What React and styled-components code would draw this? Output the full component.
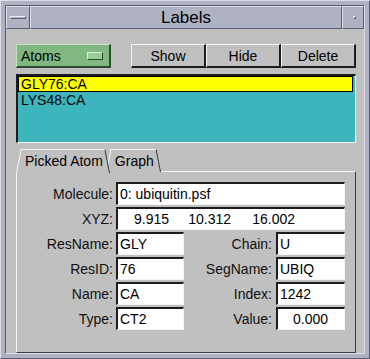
import React from "react";
import styled, { createGlobalStyle } from "styled-components";

const Global = createGlobalStyle`
  html, body { margin: 0; padding: 0; background: #aeb2c3; }
  body { font-family: "Liberation Sans", Arial, Helvetica, sans-serif; color: #000; }
`;

const Frame = styled.div`
  box-sizing: border-box;
  width: 370px;
  height: 359px;
  background: #aeb2c3;
  border-style: solid;
  border-width: 1px;
  border-color: #dcdee8 #5a5e73 #5a5e73 #dcdee8;
  padding: 4px;
  display: flex;
`;

const Inner = styled.div`
  flex: 1;
  display: flex;
  flex-direction: column;
  border-style: solid;
  border-width: 1px;
  border-color: #5a5e73 #dcdee8 #dcdee8 #5a5e73;
  min-height: 0;
`;

const TitleBar = styled.div`
  display: flex;
  height: 23px;
  flex: none;
`;

const TitleCell = styled.div`
  box-sizing: border-box;
  display: flex;
  align-items: center;
  justify-content: center;
  width: ${(p) => (p.$w ? `${p.$w}px` : "auto")};
  flex: ${(p) => (p.$w ? "none" : "1")};
  background: #aeb2c3;
  border-style: solid;
  border-width: 1px;
  border-color: #dcdee8 #5a5e73 #5a5e73 #dcdee8;
  font-size: 17px;
`;

const MinGlyph = styled.span`
  box-sizing: border-box;
  width: 16px;
  height: 3px;
  margin-top: -1px;
  border-style: solid;
  border-width: 1px;
  border-color: #eceef4 #5a5e73 #5a5e73 #eceef4;
`;

const MaxGlyph = styled.span`
  box-sizing: border-box;
  width: 3px;
  height: 3px;
  margin-top: -1px;
  margin-left: 3px;
  border-style: solid;
  border-width: 1px;
  border-color: #eceef4 #5a5e73 #5a5e73 #eceef4;
`;

const Body = styled.div`
  flex: 1;
  display: flex;
  flex-direction: column;
  background: #c0c0c0;
  padding: 15px 8px 0 10px;
  min-height: 0;
`;

const Toolbar = styled.div`
  display: flex;
  height: 24px;
  gap: 20px;
`;

const OptionMenu = styled.div`
  box-sizing: border-box;
  width: 95px;
  height: 24px;
  background: #80b880;
  border-style: solid;
  border-width: 1px 2px 2px 1px;
  border-color: #c6e2c6 #2c4a2c #2c4a2c #c6e2c6;
  display: flex;
  align-items: center;
  justify-content: space-between;
  padding: 0 6px 0 4px;
  font-size: 14px;
`;

const Indicator = styled.span`
  box-sizing: border-box;
  width: 16px;
  height: 8px;
  background: #9ccc9c;
  border-style: solid;
  border-width: 1px;
  border-color: #d8ecd8 #2c4a2c #2c4a2c #d8ecd8;
`;

const ButtonGroup = styled.div`
  flex: 1;
  display: grid;
  grid-template-columns: repeat(3, 1fr);
`;

const PushButton = styled.div`
  box-sizing: border-box;
  display: flex;
  align-items: center;
  justify-content: center;
  background: #c0c0c0;
  border-style: solid;
  border-width: 1px 2px 2px 1px;
  border-color: #f4f4f4 #1c1c1c #1c1c1c #f4f4f4;
  font-size: 14px;
`;

const List = styled.div`
  box-sizing: border-box;
  margin-top: 6px;
  height: 69px;
  background: #3db5bd;
  border-style: solid;
  border-width: 2px 1px 1px 2px;
  border-color: #1c1c1c #f4f4f4 #f4f4f4 #1c1c1c;
  padding: 0 2px 0 0;
`;

const ListItem = styled.div`
  box-sizing: border-box;
  height: 16px;
  line-height: 14px;
  padding-left: 2px;
  font-size: 14px;
  border: 1px solid ${(p) => (p.$selected ? "#000" : "transparent")};
  background: ${(p) => (p.$selected ? "#ffff00" : "transparent")};
`;

const Tabs = styled.div`
  display: flex;
  align-items: flex-end;
  margin-top: 6px;
  height: 23px;
  margin-bottom: -1px;
  position: relative;
  z-index: 1;
`;

const Tab = styled.div`
  position: relative;
  z-index: ${(p) => (p.$active ? 2 : 1)};
  box-sizing: border-box;
  height: ${(p) => (p.$active ? "24px" : "23px")};
  align-self: flex-start;
  padding: 0 7px ${(p) => (p.$active ? "1px" : "0")} 9px;
  margin-left: ${(p) => (p.$overlap ? "-4px" : "0")};
  display: flex;
  align-items: center;
  font-size: 14px;
  &::before,
  &::after {
    content: "";
    position: absolute;
    top: 0;
    bottom: 0;
    width: 60%;
    background: #c0c0c0;
    border-top: 1px solid #f4f4f4;
    z-index: -1;
    box-sizing: border-box;
  }
  &::before {
    left: 0;
    border-left: 1px solid #f4f4f4;
    transform-origin: bottom left;
    transform: skewX(-11deg);
  }
  &::after {
    right: 0;
    border-right: 1px solid #3a3a3a;
    transform-origin: bottom right;
    transform: skewX(11deg);
  }
`;

const Panel = styled.div`
  flex: 1;
  box-sizing: border-box;
  position: relative;
  z-index: 0;
  border-style: solid;
  border-width: 1px;
  border-color: #f4f4f4 #3a3a3a #3a3a3a #f4f4f4;
  padding-top: 10px;
  display: grid;
  grid-template-columns: 99px 68px 92px 69px;
  grid-auto-rows: 23px;
  row-gap: 2px;
  align-content: start;
`;

const Label = styled.div`
  text-align: right;
  padding-right: ${(p) => p.$pr || 3}px;
  font-size: 14px;
  display: flex;
  align-items: center;
  justify-content: flex-end;
  color: #111;
`;

const Field = styled.div`
  box-sizing: border-box;
  grid-column: ${(p) => (p.$wide ? "2 / 5" : "auto")};
  background: #fff;
  border-style: solid;
  border-width: 2px 1px 1px 2px;
  border-color: #1c1c1c #f4f4f4 #f4f4f4 #1c1c1c;
  display: flex;
  align-items: center;
  justify-content: ${(p) => (p.$right ? "flex-end" : "flex-start")};
  padding: 0 ${(p) => (p.$right ? "16px" : "0")} 0 ${(p) => (p.$right ? "0" : "2px")};
  font-size: 14px;
  white-space: pre;
`;

const Coord = styled.span`
  display: inline-block;
  text-align: right;
  width: ${(p) => p.$w}px;
`;

export default function App() {
  return (
    <>
      <Global />
      <Frame>
        <Inner>
          <TitleBar>
            <TitleCell $w={24}>
              <MinGlyph />
            </TitleCell>
            <TitleCell>Labels</TitleCell>
            <TitleCell $w={22}>
              <MaxGlyph />
            </TitleCell>
          </TitleBar>
          <Body>
            <Toolbar>
              <OptionMenu>
                <span>Atoms</span>
                <Indicator />
              </OptionMenu>
              <ButtonGroup>
                <PushButton>Show</PushButton>
                <PushButton>Hide</PushButton>
                <PushButton>Delete</PushButton>
              </ButtonGroup>
            </Toolbar>
            <List>
              <ListItem $selected>GLY76:CA</ListItem>
              <ListItem>LYS48:CA</ListItem>
            </List>
            <Tabs>
              <Tab $active>Picked Atom</Tab>
              <Tab $overlap>Graph</Tab>
            </Tabs>
            <Panel>
              <Label>Molecule:</Label>
              <Field $wide>0: ubiquitin.psf</Field>
              <Label>XYZ:</Label>
              <Field $wide>
                <Coord $w={49}>9.915</Coord>
                <Coord $w={62}>10.312</Coord>
                <Coord $w={64}>16.002</Coord>
              </Field>
              <Label>ResName:</Label>
              <Field>GLY</Field>
              <Label $pr={4}>Chain:</Label>
              <Field>U</Field>
              <Label>ResID:</Label>
              <Field>76</Field>
              <Label $pr={4}>SegName:</Label>
              <Field>UBIQ</Field>
              <Label>Name:</Label>
              <Field>CA</Field>
              <Label $pr={4}>Index:</Label>
              <Field>1242</Field>
              <Label>Type:</Label>
              <Field>CT2</Field>
              <Label $pr={4}>Value:</Label>
              <Field $right>0.000</Field>
            </Panel>
          </Body>
        </Inner>
      </Frame>
    </>
  );
}
